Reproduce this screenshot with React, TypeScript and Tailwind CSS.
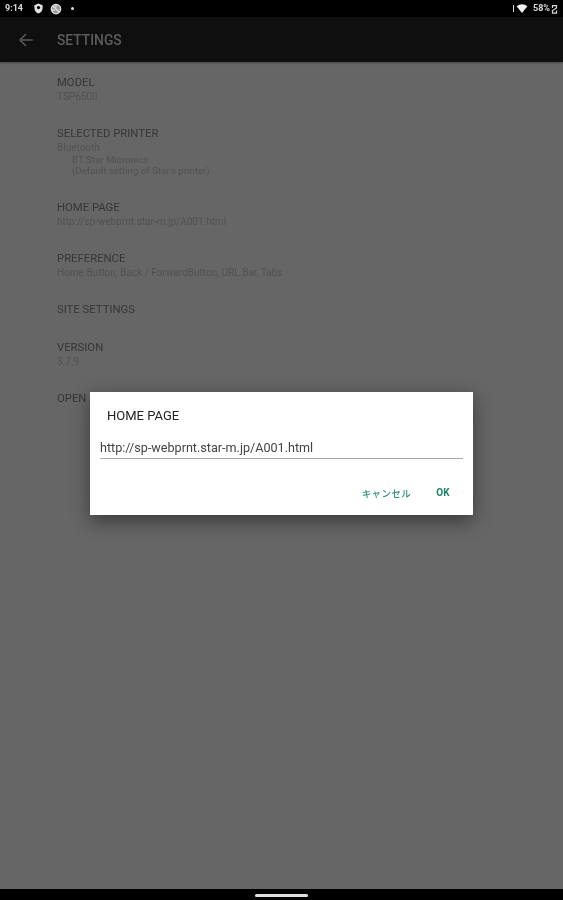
import React from "react";

function Item({ label, children }: { label: string; children?: React.ReactNode }) {
  return (
    <div className="flex flex-col gap-[1px] pb-[1px]">
      <div className="text-[11.3px] leading-[14px] text-[#363636]">{label}</div>
      {children}
    </div>
  );
}

function Sub({ children, indent, tight }: { children: React.ReactNode; indent?: boolean; tight?: boolean }) {
  return (
    <div className={`text-[#525252] ${tight ? "leading-[11.5px]" : "leading-[12px]"} ${indent ? "pl-[15px] text-[9.7px]" : "text-[10px]"}`}>
      {children}
    </div>
  );
}

export default function App() {
  return (
    <div className="relative flex h-[900px] w-[563px] flex-col overflow-hidden bg-[#666666] font-['Roboto',sans-serif]">
      <div className="flex h-[17px] items-center justify-between bg-black pl-[5px] pr-[5px] text-[9px] font-medium text-[#d8d8d8] blur-[0.3px]">
        <div className="flex items-center">
          <span className="font-bold">9:14</span>
          <svg className="ml-[10px]" width="11" height="11" viewBox="0 0 24 24" fill="#e0e0e0">
            <path d="M12 1 3 5v6c0 6 4 10 9 12 5-2 9-6 9-12V5z" />
            <circle cx="12" cy="10" r="3.5" fill="#000" />
          </svg>
          <svg className="ml-[6px]" width="12" height="12" viewBox="0 0 24 24" fill="#9a9a9a" stroke="#e0e0e0" strokeWidth="2.5">
            <circle cx="12" cy="12" r="9.5" />
            <path d="m6 6 12 12M12 3v6M4 14h6" />
          </svg>
          <span className="ml-[9px] h-[3px] w-[3px] rounded-full bg-[#e0e0e0]" />
        </div>
        <div className="flex items-center">
          <span className="h-[7px] w-[1.5px] bg-[#d8d8d8]" />
          <svg className="ml-[2px]" width="12" height="9" viewBox="0 0 24 20" fill="#f0f0f0">
            <path d="M0 5c7-6 17-6 24 0L12 20z" />
          </svg>
          <span className="ml-[5px] text-[9px] font-bold">58%</span>
          <svg className="ml-[1px]" width="7" height="10" viewBox="0 0 14 20" fill="none" stroke="#d8d8d8" strokeWidth="2.5">
            <path d="M3 8V3h8v5l-8 5v5h8v-5" />
          </svg>
        </div>
      </div>

      <div className="flex h-[45px] items-center bg-[#0f0f0f] pt-[1px] shadow-[0_1px_2px_rgba(0,0,0,0.35)]">
        <svg className="ml-[17px]" width="18" height="18" viewBox="0 0 24 24" fill="none" stroke="#595959" strokeWidth="2">
          <path d="M21 12H4M12 4l-8 8 8 8" />
        </svg>
        <span className="ml-[22px] text-[13.8px] font-medium text-[#5c5c5c] blur-[0.3px]">SETTINGS</span>
      </div>

      <div className="flex flex-col gap-[23px] pl-[57px] pt-[14px] blur-[0.4px]">
        <Item label="MODEL">
          <Sub>TSP650II</Sub>
        </Item>
        <Item label="SELECTED PRINTER">
          <div className="flex flex-col">
            <Sub tight>Bluetooth</Sub>
            <Sub tight indent>BT:Star Micronics</Sub>
            <Sub tight indent>(Default setting of Star's printer)</Sub>
          </div>
        </Item>
        <Item label="HOME PAGE">
          <Sub>http://sp-webprnt.star-m.jp/A001.html</Sub>
        </Item>
        <Item label="PREFERENCE">
          <Sub>Home Button, Back / ForwardButton, URL Bar, Tabs</Sub>
        </Item>
        <Item label="SITE SETTINGS" />
        <Item label="VERSION">
          <Sub>3.7.9</Sub>
        </Item>
        <Item label="OPEN SOURCE LICENSES" />
      </div>

      <div className="absolute left-[90px] top-[392px] flex h-[123px] w-[383px] flex-col bg-white pl-[10px] pr-[10px] shadow-[0_6px_18px_rgba(0,0,0,0.45)]">
        <div className="pl-[7px] pt-[15px] text-[13px] leading-[17px] text-[#222222] blur-[0.3px]">HOME PAGE</div>
        <div className="mt-[16px] border-b border-[#a8a8a8] pb-[2px] text-[12.6px] leading-[16px] text-[#444444] blur-[0.3px]">
          http://sp-webprnt.star-m.jp/A001.html
        </div>
        <div className="mt-[27px] flex justify-end gap-[25px] pr-[13px] font-medium leading-[14px] text-[#2a9078] blur-[0.3px]">
          <span className="font-['Noto_Sans_CJK_JP','Roboto',sans-serif] text-[9.5px] tracking-[0.4px]">キャンセル</span>
          <span className="text-[10px] font-bold tracking-[0.3px] text-[#1d8468]">OK</span>
        </div>
      </div>

      <div className="mt-auto flex h-[11px] items-center justify-center bg-black pt-[1px]">
        <div className="h-[3px] w-[53px] rounded-full bg-[#e0e0e0]" />
      </div>
    </div>
  );
}
